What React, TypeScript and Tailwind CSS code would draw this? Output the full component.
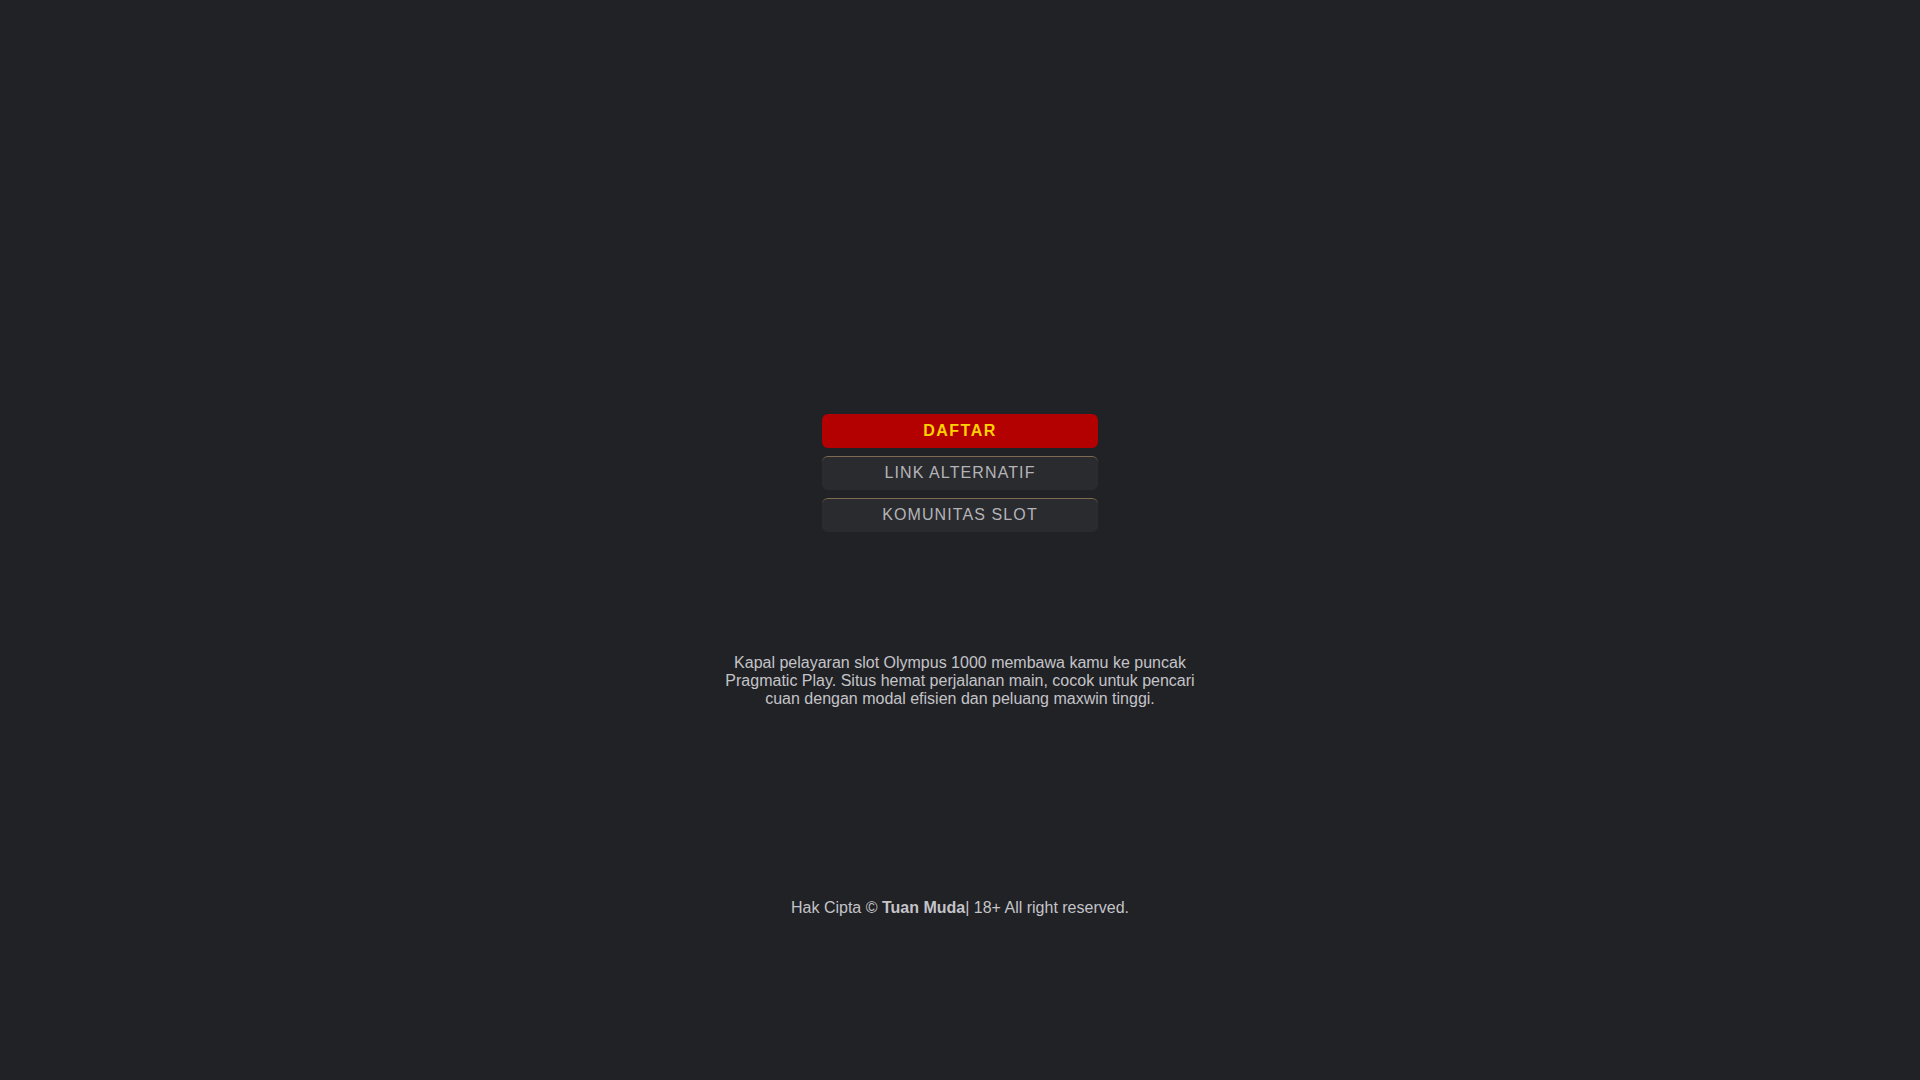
import React from "react";

export default function App() {
  const font = { fontFamily: '"Liberation Sans", Arial, sans-serif' };
  return (
    <div className="min-h-screen w-full bg-[#212226] flex flex-col items-center" style={font}>
      <div className="pt-[414px] flex flex-col gap-[8px] w-[276px]">
        <a className="h-[34px] rounded-[6px] bg-[#b30000] flex items-center justify-center text-[16px] font-bold tracking-[1.5px] text-[#ffd200]">
          DAFTAR
        </a>
        <a className="h-[34px] pb-[2px] rounded-[6px] bg-[#2a2b2e] border-t border-[#7d6c52] flex items-center justify-center text-[16px] tracking-[1.1px] text-[#b4b4b8]">
          LINK ALTERNATIF
        </a>
        <a className="h-[34px] pb-[2px] rounded-[6px] bg-[#2a2b2e] border-t border-[#7d6c52] flex items-center justify-center text-[16px] tracking-[1.1px] text-[#b4b4b8]">
          KOMUNITAS SLOT
        </a>
      </div>
      <p className="mt-[122px] w-[480px] text-center text-[16px] leading-[18px] text-[#c4c4c8]">
        Kapal pelayaran slot Olympus 1000 membawa kamu ke puncak Pragmatic Play. Situs hemat perjalanan main, cocok untuk pencari cuan dengan modal efisien dan peluang maxwin tinggi.
      </p>
      <p className="mt-[191px] text-center text-[16px] leading-[18px] text-[#c4c4c8]">
        Hak Cipta © <b className="font-bold">Tuan Muda</b>| 18+ All right reserved.
      </p>
    </div>
  );
}
